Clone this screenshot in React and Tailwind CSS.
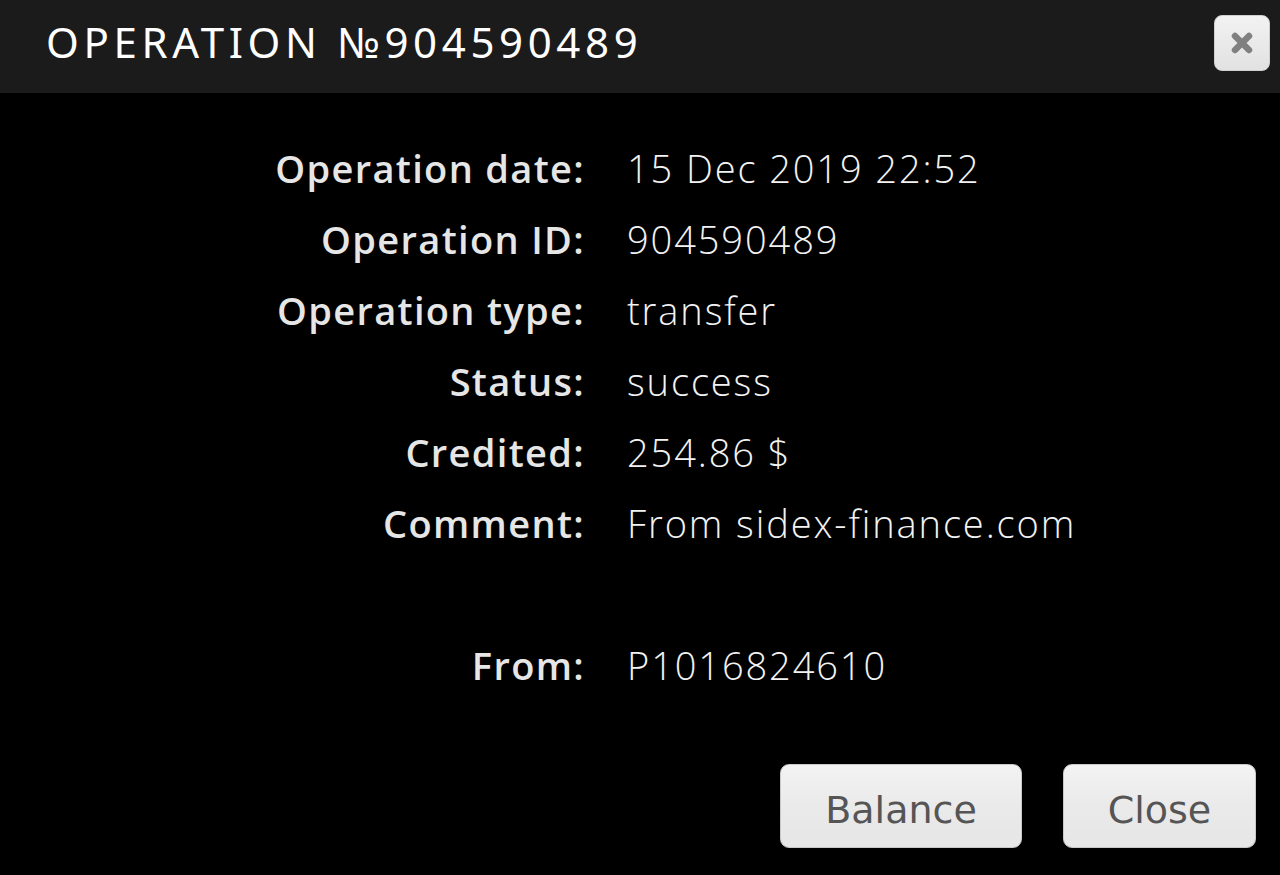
export default function App() {
  const rows = [
    ["Operation date:", "15 Dec 2019 22:52"],
    ["Operation ID:", "904590489"],
    ["Operation type:", "transfer"],
    ["Status:", "success"],
    ["Credited:", "254.86 $"],
    ["Comment:", "From sidex-finance.com"],
    ["", ""],
    ["From:", "P1016824610"],
  ];
  return (
    <div className="w-[1280px] h-[875px] bg-black flex flex-col overflow-hidden">
      <div className="h-[93px] bg-[#1b1b1b] flex items-center justify-between pl-[46px] pr-[10px] pb-[10px] shrink-0">
        <div
          className="text-white text-[42px] tracking-[0.11em] leading-none"
          style={{ fontFamily: '"Noto Sans", "DejaVu Sans", sans-serif' }}
        >
          OPERATION №904590489
        </div>
        <button className="w-[56px] h-[56px] rounded-[8px] bg-gradient-to-b from-[#f2f2f2] to-[#e2e2e2] border border-[#cfcfcf] flex items-center justify-center mt-[2px]">
          <svg width="28" height="28" viewBox="0 0 28 28">
            <path d="M7 7 L21 21 M21 7 L7 21" stroke="#808080" strokeWidth="6.5" strokeLinecap="round" />
          </svg>
        </button>
      </div>
      <div className="flex flex-col pt-[39px]" style={{ fontFamily: '"Open Sans", sans-serif' }}>
        {rows.map(([l, v], i) => (
          <div key={i} className="flex h-[71px] items-center leading-none">
            <div className="w-[585px] text-right text-[38px] font-semibold text-[#e6e6e6] tracking-[0.035em]">{l}</div>
            <div className="pl-[42px] text-[38px] font-light text-[#f2f2f2] tracking-[0.05em]">{v}</div>
          </div>
        ))}
      </div>
      <div className="flex justify-end gap-[41px] pr-[24px] mt-[64px]">
        <button
          className="w-[242px] h-[84px] pt-[8px] rounded-[9px] border border-[#c8c8c8] bg-gradient-to-b from-[#f3f3f3] via-[#eaeaea] to-[#e6e6e6] text-[#555] text-[38px]"
          style={{ fontFamily: '"DejaVu Sans", sans-serif' }}
        >
          Balance
        </button>
        <button
          className="w-[193px] h-[84px] pt-[8px] rounded-[9px] border border-[#c8c8c8] bg-gradient-to-b from-[#f3f3f3] via-[#eaeaea] to-[#e6e6e6] text-[#555] text-[38px]"
          style={{ fontFamily: '"DejaVu Sans", sans-serif' }}
        >
          Close
        </button>
      </div>
    </div>
  );
}
